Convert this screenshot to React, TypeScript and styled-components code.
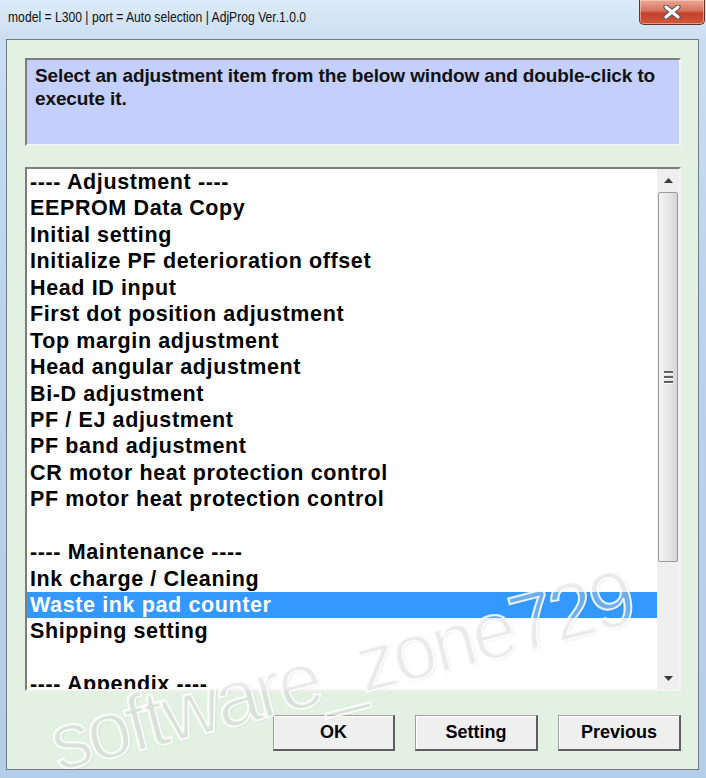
import React from 'react';
import styled, { createGlobalStyle } from 'styled-components';

const GlobalStyle = createGlobalStyle`
  html, body {
    margin: 0;
    padding: 0;
    background: #c2d8ee;
  }
`;

const items = [
  '---- Adjustment ----',
  'EEPROM Data Copy',
  'Initial setting',
  'Initialize PF deterioration offset',
  'Head ID input',
  'First dot position adjustment',
  'Top margin adjustment',
  'Head angular adjustment',
  'Bi-D adjustment',
  'PF / EJ adjustment',
  'PF band adjustment',
  'CR motor heat protection control',
  'PF motor heat protection control',
  '',
  '---- Maintenance ----',
  'Ink charge / Cleaning',
  'Waste ink pad counter',
  'Shipping setting',
  '',
  '---- Appendix ----',
];

const SELECTED = 16;

export default function App() {
  return (
    <>
      <GlobalStyle />
      <Window>
        <TitleBar>
          <Title>model = L300 | port = Auto selection | AdjProg Ver.1.0.0</Title>
          <CloseButton>
            <svg width="22" height="14" viewBox="0 0 22 14">
              <path d="M5 2 L17 12 M17 2 L5 12" stroke="#5b5b5b" strokeWidth="5.5" strokeLinecap="round" />
              <path d="M5 2 L17 12 M17 2 L5 12" stroke="#ffffff" strokeWidth="3" strokeLinecap="round" />
            </svg>
          </CloseButton>
        </TitleBar>
        <Client>
          <InfoBox>
            Select an adjustment item from the below window and double-click to execute it.
          </InfoBox>
          <ListBox>
            <Items>
              {items.map((text, idx) => (
                <Row key={idx} $selected={idx === SELECTED}>
                  {text}
                </Row>
              ))}
            </Items>
            <ScrollBar>
              <ArrowButton>
                <svg width="9" height="5" viewBox="0 0 9 5">
                  <path d="M0 5 L4.5 0 L9 5 Z" fill="#3c3c3c" />
                </svg>
              </ArrowButton>
              <Track>
                <Thumb>
                  <Grip>
                    <span />
                    <span />
                    <span />
                  </Grip>
                </Thumb>
              </Track>
              <ArrowButton>
                <svg width="9" height="5" viewBox="0 0 9 5">
                  <path d="M0 0 L9 0 L4.5 5 Z" fill="#3c3c3c" />
                </svg>
              </ArrowButton>
            </ScrollBar>
          </ListBox>
          <ButtonRow>
            <Button $width={122}>OK</Button>
            <Button $width={123}>Setting</Button>
            <Button $width={123}>Previous</Button>
          </ButtonRow>
          <Watermark>software_zone729</Watermark>
        </Client>
      </Window>
    </>
  );
}

const Window = styled.div`
  width: 706px;
  height: 778px;
  box-sizing: border-box;
  padding: 0 7px 8px 6px;
  display: flex;
  flex-direction: column;
  background: linear-gradient(
    180deg,
    #dcebf8 0px,
    #c9def2 40px,
    #bcd3ec 300px,
    #b4cde9 778px
  );
  overflow: hidden;
`;

const TitleBar = styled.div`
  height: 39px;
  display: flex;
  justify-content: space-between;
  align-items: flex-start;
  flex-shrink: 0;
`;

const Title = styled.div`
  margin-top: 8px;
  margin-left: 2px;
  font-family: 'Liberation Sans', sans-serif;
  font-size: 15px;
  color: #111;
  white-space: nowrap;
  transform: scaleX(0.81);
  transform-origin: 0 50%;
`;

const CloseButton = styled.div`
  width: 66px;
  height: 25px;
  margin-right: -6px;
  box-sizing: border-box;
  border: 1px solid #6e2e22;
  border-top: none;
  border-radius: 0 0 5px 5px;
  background: linear-gradient(180deg, #e9a896 0%, #d8735e 45%, #c4402a 55%, #cf5a3c 100%);
  box-shadow: inset 0 0 0 1px rgba(255, 220, 210, 0.5);
  display: flex;
  align-items: center;
  justify-content: center;
`;

const Client = styled.div`
  position: relative;
  flex: 1;
  box-sizing: border-box;
  border: 1px solid #6f7b86;
  background: #e2f1e2;
  padding: 18px 17px 17px 18px;
  display: flex;
  flex-direction: column;
  overflow: hidden;
`;

const InfoBox = styled.div`
  height: 88px;
  box-sizing: border-box;
  border-top: 2px solid #7d7d7d;
  border-left: 2px solid #7d7d7d;
  border-bottom: 2px solid #f4f4f4;
  border-right: 2px solid #f4f4f4;
  background: #c5cffb;
  padding: 4px 8px;
  font-family: 'Liberation Sans', sans-serif;
  font-weight: bold;
  font-size: 19px;
  letter-spacing: -0.12px;
  line-height: 23px;
  color: #111;
`;

const ListBox = styled.div`
  margin-top: 21px;
  height: 524px;
  box-sizing: border-box;
  border-top: 2px solid #7d7d7d;
  border-left: 2px solid #7d7d7d;
  border-bottom: 2px solid #f4f4f4;
  border-right: 2px solid #f4f4f4;
  background: #ffffff;
  display: flex;
  overflow: hidden;
`;

const Items = styled.div`
  flex: 1;
  overflow: hidden;
`;

const Row = styled.div<{ $selected: boolean }>`
  height: 26.45px;
  line-height: 26px;
  padding-left: 3px;
  font-family: 'Liberation Sans', sans-serif;
  font-weight: bold;
  font-size: 21.5px;
  letter-spacing: 0.62px;
  white-space: nowrap;
  color: ${(p) => (p.$selected ? '#ffffff' : '#000000')};
  background: ${(p) => (p.$selected ? '#3399ff' : 'transparent')};
`;

const ScrollBar = styled.div`
  width: 22px;
  display: flex;
  flex-direction: column;
  background: #efefef;
`;

const ArrowButton = styled.div`
  height: 22px;
  display: flex;
  align-items: center;
  justify-content: center;
  flex-shrink: 0;
`;

const Track = styled.div`
  flex: 1;
  padding: 1px 1px;
  display: flex;
  flex-direction: column;
`;

const Thumb = styled.div`
  height: 370px;
  box-sizing: border-box;
  border: 1px solid #9a9a9a;
  border-radius: 2px;
  background: linear-gradient(90deg, #f4f4f4 0%, #e6e6e6 50%, #d6d6d6 100%);
  display: flex;
  align-items: center;
  justify-content: center;
`;

const Grip = styled.div`
  display: flex;
  flex-direction: column;
  gap: 2px;

  span {
    display: block;
    width: 9px;
    height: 2px;
    background: #5e5e5e;
    border-bottom: 1px solid #ffffff;
  }
`;

const ButtonRow = styled.div`
  margin-top: 24px;
  display: flex;
  justify-content: flex-end;
  gap: 20px;
`;

const Button = styled.div<{ $width: number }>`
  width: ${(p) => p.$width}px;
  height: 36px;
  box-sizing: border-box;
  border-top: 1px solid #a0a0a0;
  border-left: 1px solid #a0a0a0;
  border-right: 2px solid #5e5e5e;
  border-bottom: 2px solid #5e5e5e;
  box-shadow: inset 1px 1px 0 #ffffff;
  background: #efefef;
  display: flex;
  align-items: center;
  justify-content: center;
  font-family: 'Liberation Sans', sans-serif;
  font-weight: bold;
  font-size: 18px;
  color: #000;
`;

const Watermark = styled.div`
  position: absolute;
  left: 56px;
  top: 658px;
  transform: rotate(-14.5deg);
  transform-origin: 0 100%;
  font-family: 'Liberation Sans', sans-serif;
  font-size: 80px;
  letter-spacing: -3.5px;
  white-space: nowrap;
  color: rgba(255, 255, 255, 0.32);
  -webkit-text-stroke: 2px rgba(255, 255, 255, 0.85);
  text-shadow: 1px 1px 2px rgba(0, 0, 0, 0.12);
  pointer-events: none;
`;
